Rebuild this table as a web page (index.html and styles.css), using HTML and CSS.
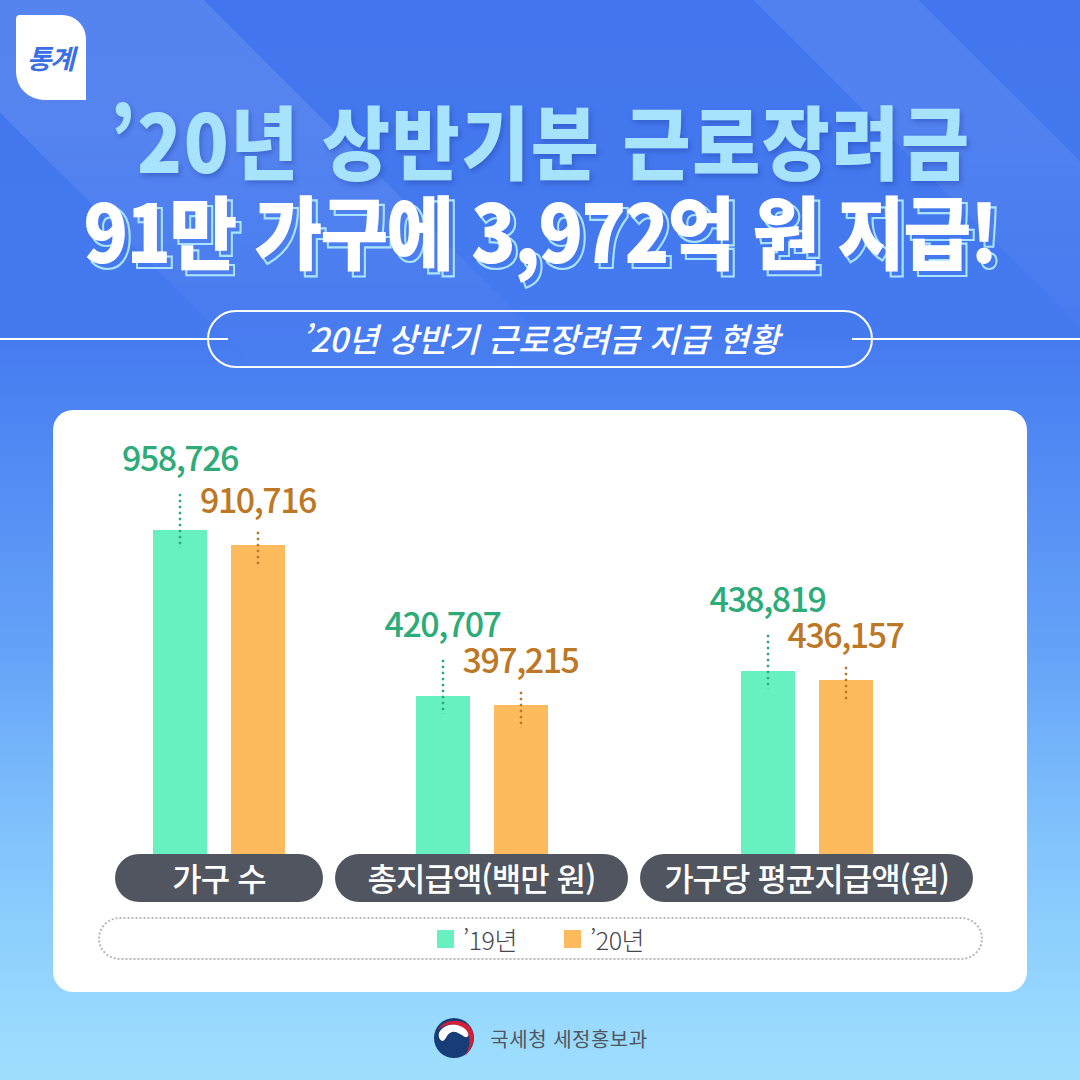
FILE: index.html
```html
<!DOCTYPE html>
<html lang="ko">
<head>
<meta charset="utf-8">
<title>근로장려금 지급 현황</title>
<link rel="stylesheet" href="styles.css">
</head>
<body>
<div class="page">
  <div class="badge">통계</div>
  <h1 class="title">
    <span class="t1">’20년 상반기분 근로장려금</span>
    <span class="t2" data-text="91만 가구에 3,972억 원 지급!">91만 가구에 3,972억 원 지급!</span>
  </h1>
  <div class="sub">
    <span class="sub-line"></span>
    <div class="sub-pill">’20년 상반기 근로장려금 지급 현황</div>
    <span class="sub-line"></span>
  </div>
  <section class="card">
    <div class="groups">
      <div class="group g1">
        <div class="bars">
          <div class="col green"><span class="val">958,726</span><span class="stem"></span><span class="bar" style="height:324px"></span></div>
          <div class="col orange"><span class="val">910,716</span><span class="stem"></span><span class="bar" style="height:309px"></span></div>
        </div>
        <div class="cat">가구 수</div>
      </div>
      <div class="group g2">
        <div class="bars">
          <div class="col green"><span class="val">420,707</span><span class="stem"></span><span class="bar" style="height:158px"></span></div>
          <div class="col orange"><span class="val">397,215</span><span class="stem"></span><span class="bar" style="height:149px"></span></div>
        </div>
        <div class="cat">총지급액(백만 원)</div>
      </div>
      <div class="group g3">
        <div class="bars">
          <div class="col green"><span class="val">438,819</span><span class="stem"></span><span class="bar" style="height:183px"></span></div>
          <div class="col orange"><span class="val">436,157</span><span class="stem"></span><span class="bar" style="height:174px"></span></div>
        </div>
        <div class="cat">가구당 평균지급액(원)</div>
      </div>
    </div>
    <div class="legend">
      <span class="item"><span class="sw sw-green"></span>’19년</span>
      <span class="item"><span class="sw sw-orange"></span>’20년</span>
    </div>
  </section>
  <footer class="footer">
    <svg class="logo" viewBox="0 0 44 44" width="44" height="44" aria-hidden="true">
      <circle cx="22" cy="22" r="20" fill="#163d78"/>
      <path d="M7 17 C 11 8, 27 5, 35 13 C 38 17, 37 22, 33 21 C 29 19, 25 15, 20 16 C 15 17, 14 24, 11 25 C 8 25, 6 21, 7 17 Z" fill="#ffffff"/>
      <path d="M6 14 C 11 3, 30 1, 39 12 C 44 20, 41 33, 33 40 C 38 32, 39 22, 35 15 C 29 7, 14 6, 6 14 Z" fill="#d42037"/>
    </svg>
    <span class="footer-text">국세청 세정홍보과</span>
  </footer>
</div>
</body>
</html>
```
FILE: styles.css
```css
* { box-sizing: border-box; }
html, body { margin: 0; padding: 0; }
body {
  font-family: "Noto Sans CJK KR", "Noto Sans", sans-serif;
  width: 1080px;
  height: 1080px;
  overflow: hidden;
}
.page {
  position: relative;
  z-index: 0;
  width: 1080px;
  height: 1080px;
  padding-top: 15px;
  display: flex;
  flex-direction: column;
  background: linear-gradient(180deg, #4376ee 0%, #4479ef 30%, #4f87f3 40%, #64a2f8 60%, #82c4fc 78%, #9fe0fe 100%);
}
.page::before {
  content: "";
  position: absolute;
  inset: 0;
  z-index: -1;
  background: linear-gradient(45deg, transparent 44.8%, rgba(255,255,255,0.10) 44.8%, rgba(255,255,255,0.10) 59.4%, transparent 59.4%, transparent 84.9%, rgba(255,255,255,0.08) 84.9%, rgba(255,255,255,0.08) 92.5%, transparent 92.5%);
  -webkit-mask-image: linear-gradient(180deg, #000 0, #000 120px, transparent 380px);
  mask-image: linear-gradient(180deg, #000 0, #000 120px, transparent 380px);
}
.badge {
  margin-left: 16px;
  width: 70px;
  height: 85px;
  background: #ffffff;
  border-radius: 4px 24px 0 28px;
  display: flex;
  align-items: center;
  justify-content: center;
  color: #3b6fe6;
  font-size: 27px;
  font-weight: 700;
  font-style: italic;
  letter-spacing: -1.5px;
  padding-right: 2px;
}
.title {
  margin: -3px 0 0;
  display: flex;
  flex-direction: column;
  align-items: center;
  gap: 8px;
  font-weight: 900;
  font-size: 74px;
  line-height: 82px;
  letter-spacing: -2px;
}
.t1 {
  display: inline-block;
  color: #a8e3fd;
  letter-spacing: 1.5px;
  text-shadow: 2px 3px 5px rgba(25, 55, 150, 0.35);
  transform: scaleY(1.08);
}
.t2 {
  display: inline-block;
  position: relative;
  z-index: 0;
  color: #ffffff;
  transform: scaleY(1.08);
}
.t2::before {
  content: attr(data-text);
  position: absolute;
  left: 5px;
  top: 5px;
  z-index: -1;
  color: transparent;
  -webkit-text-stroke: 2px #a9e3fc;
  white-space: nowrap;
}
.sub {
  margin-top: 41px;
  display: flex;
  align-items: center;
  height: 58px;
}
.sub-line {
  width: 228px;
  height: 2px;
  background: #ffffff;
}
.sub-pill {
  width: 666px;
  height: 58px;
  margin: 0 -21px;
  border: 2px solid #ffffff;
  border-radius: 29px;
  display: flex;
  align-items: center;
  justify-content: center;
  color: #ffffff;
  font-size: 33px;
  font-weight: 500;
  font-style: italic;
  letter-spacing: 0;
  padding-bottom: 2px;
}
.card {
  margin: 42px 53px 0;
  height: 582px;
  background: #ffffff;
  border-radius: 20px;
  padding: 30px 44px 32px 45px;
  display: flex;
  flex-direction: column;
}
.groups {
  display: flex;
  gap: 12px;
  padding-left: 17px;
  flex: 1;
}
.group {
  display: flex;
  flex-direction: column;
}
.g1 { width: 208px; }
.g2 { width: 293px; }
.g3 { width: 333px; }
.bars {
  flex: 1;
  display: flex;
  justify-content: center;
  align-items: flex-end;
  gap: 24px;
}
.col {
  width: 54px;
  display: flex;
  flex-direction: column;
  align-items: center;
}
.val {
  font-size: 34px;
  line-height: 34px;
  font-weight: 500;
  letter-spacing: -1.5px;
  white-space: nowrap;
}
.stem {
  position: relative;
  z-index: 1;
  width: 4px;
  background-image: radial-gradient(circle, currentColor 1.2px, transparent 1.7px);
  background-size: 4px 6px;
  background-position: 0 0;
}
.bar {
  width: 54px;
}
.green { color: #2dab79; }
.orange { color: #bd7826; }
.green .stem { margin-top: 18px; height: 56px; margin-bottom: -18px; }
.orange .stem { margin-top: 14px; height: 38px; margin-bottom: -23px; }
.green .bar { background: #67f0c0; }
.orange .bar { background: #fdbb5e; }
.cat {
  height: 48px;
  border-radius: 24px;
  background: #51555f;
  color: #ffffff;
  font-size: 32px;
  font-weight: 500;
  letter-spacing: -1px;
  display: flex;
  align-items: center;
  justify-content: center;
  padding-bottom: 2px;
  white-space: nowrap;
}
.legend {
  margin-top: 15px;
  height: 43px;
  border: 2px dotted #b8b8b8;
  border-radius: 22px;
  display: flex;
  align-items: center;
  justify-content: center;
  gap: 47px;
  color: #45474f;
  font-size: 25px;
  font-weight: 300;
  letter-spacing: -0.5px;
}
.item {
  display: flex;
  align-items: center;
  gap: 9px;
}
.sw {
  width: 17px;
  height: 18px;
}
.sw-green { background: #67f0c0; }
.sw-orange { background: #fdbb5e; }
.footer {
  flex: 1;
  display: flex;
  align-items: center;
  justify-content: center;
  gap: 14px;
  padding-top: 4px;
}
.logo { display: block; }
.footer-text {
  color: #50555f;
  font-size: 20px;
  font-weight: 400;
  letter-spacing: 0.5px;
}
```
